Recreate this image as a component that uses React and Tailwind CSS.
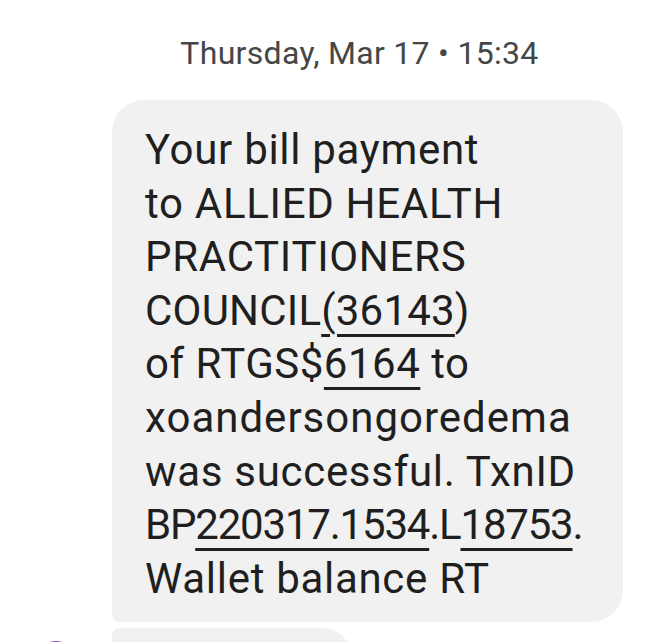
import React from "react";

const lines = [
    { segs: [{ t: "Your bill payment" }] },
    { segs: [{ t: "to ALLIED HEALTH" }] },
    { segs: [{ t: "PRACTITIONERS" }] },
    { segs: [{ t: "COUNCIL" }, { t: "(36143", u: true }, { t: ")" }], tight: "tracking-[0.2px]" },
    { segs: [{ t: "of RTGS$" }, { t: "6164", u: true }, { t: " to" }], tight: "tracking-[0.5px]" },
    { segs: [{ t: "xoandersongoredema" }], tight: "tracking-[1px]" },
    { segs: [{ t: "was successful. TxnID" }] },
    {
        segs: [{ t: "BP" }, { t: "220317.1534", u: true }, { t: ".L" }, { t: "18753", u: true }, { t: "." }],
        tight: "tracking-[-1.2px]",
    },
    { segs: [{ t: "Wallet balance RT" }] },
];

function App() {
    return (
        <div
            className="w-[669px] h-[642px] overflow-hidden bg-white"
            style={{ fontFamily: "Roboto, 'Noto Sans', sans-serif" }}
        >
            <div className="pt-[32px] pb-[26px] pl-[112px] pr-[62px] text-center text-[32px] tracking-[0.3px] leading-[42px] text-[#444746]">
                Thursday, Mar 17 • 15:34
            </div>

            <div className="pl-[112px] pr-[46px]">
                <div className="bg-[#f1f1f1] rounded-[32px] rounded-bl-[8px] pl-[33px] pr-[20px] pt-[23px] pb-[17px] text-[42px] tracking-[0.7px] leading-[53.6px] text-[#1f1f1f]">
                    {lines.map((line, i) => (
                        <div key={i} className={"whitespace-nowrap " + (line.tight || "")}>
                            {line.segs.map((seg, j) =>
                                seg.u ? (
                                    <span
                                        key={j}
                                        className="underline decoration-[3px] underline-offset-[9px] decoration-[#1f1f1f]"
                                    >
                                        {seg.t}
                                    </span>
                                ) : (
                                    <span key={j}>{seg.t}</span>
                                )
                            )}
                        </div>
                    ))}
                </div>
            </div>

            <div className="flex items-start mt-[6px]">
                <div className="w-[112px] flex justify-center pt-[13px]">
                    <div className="w-[40px] h-[40px] rounded-full bg-[#9b4fd0]" />
                </div>
                <div className="w-[240px] h-[60px] bg-[#f1f1f1] rounded-[32px] rounded-tl-[8px]" />
            </div>
        </div>
    );
}

export default App;
